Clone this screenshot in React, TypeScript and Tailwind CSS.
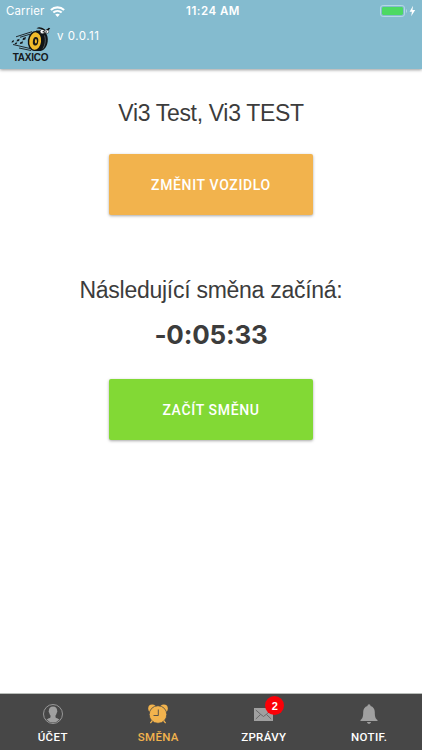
import type { ReactNode } from 'react';

function WifiIcon() {
  return (
    <svg width="15" height="11" viewBox="0 0 15 11" fill="none" stroke="#fff" strokeWidth="2.1">
      <path d="M.9 4C4.6.5 10.400.5 14.100 4" />
      <path d="M3.300 6.600c2.400-2.200 6-2.200 8.400 0" />
      <path d="M7.500 10.900 5.200 8.600c1.300-1.100 3.300-1.100 4.600 0Z" fill="#fff" stroke="none" />
    </svg>
  );
}

function BatteryIcon() {
  return (
    <svg width="36" height="12" viewBox="0 0 36 12" fill="none">
      <rect x=".5" y=".5" width="24" height="11" rx="2.6" stroke="#b5d9e5" />
      <rect x="2" y="2" width="21" height="8" rx="1.4" fill="#4cd964" />
      <path d="M26 4c1.300.5 1.300 3.500 0 4Z" fill="#b5d9e5" />
      <path d="M33 .8 29.600 6.700h2.300L31.200 11.200l4-6.200h-2.700Z" fill="#fff" />
    </svg>
  );
}

function TaxicoLogo() {
  return (
    <svg width="40" height="26" viewBox="0 0 40 26" fill="none">
      {/* speed trail */}
      <path d="M21 5.700 5 10.800M19 8.200 9 11.300M19 22.500 2 18.500M20 24.500 8 22" stroke="#16191c" strokeWidth=".9" />
      <path d="m1 15 2-.9-.4 2-2 .6ZM6 13.700l2.600-1-.5 2.300-2.500.6ZM12 12l3-1-.7 2.500-2.800.7ZM4 17l2.200-.7-.5 1.800-2.200.4ZM9.300 16.200l2.800-.9-.6 2.200-2.700.5Z" fill="#16191c" />
      {/* tyre */}
      <path d="M25 4.500h5c4.400.3 6.800 4.500 6.800 9.300 0 5.700-3 10.500-7.200 11.200h-6Z" fill="#111416" />
      <path d="M33.500 9.500c1.500 4 .8 9.500-1.600 13" stroke="#7d858a" strokeWidth=".6" />
      <ellipse cx="24" cy="15" rx="7.200" ry="10" transform="rotate(7 24 15)" fill="#111416" />
      <ellipse cx="24.200" cy="15" rx="5.900" ry="8.700" transform="rotate(7 24 15)" fill="#f0bb2b" />
      <ellipse cx="24.600" cy="15.200" rx="2.700" ry="4.300" transform="rotate(7 24 15)" fill="#191919" />
      <ellipse cx="24.900" cy="15.300" rx="1" ry="2.200" fill="#f0bb2b" />
      {/* eyes and brows */}
      <ellipse cx="31.500" cy="5.500" rx="2.400" ry="2.200" fill="#fff" stroke="#111" strokeWidth=".5" />
      <ellipse cx="35.800" cy="5.600" rx="1.900" ry="2" fill="#fff" stroke="#111" strokeWidth=".5" />
      <circle cx="32.300" cy="5.800" r=".8" fill="#111" />
      <circle cx="35.300" cy="5.900" r=".7" fill="#111" />
      <path d="M25.500 2.500C27.500.5 30 .7 34 3.500l-.4 1.200C30.500 3 28.500 2.200 25.500 2.500ZM34.800 4.200l3-2.400 1.400.5-1.600 2Z" fill="#111" />
    </svg>
  );
}

function AccountIcon() {
  return (
    <svg width="20" height="20" viewBox="0 0 20 20" fill="none">
      <circle cx="10" cy="10" r="9.500" stroke="#a0a0a0" strokeWidth=".9" />
      <path
        d="M10 2.400c2.800 0 4.200 1.700 4.100 4.200.5.300.2 2-.4 2.300-.2 1.200-.7 1.900-1.200 2.500v1.800c.4 1 2.800 1.200 4 2.400A8.500 8.500 0 0 1 10 18.500a8.500 8.500 0 0 1-6.500-2.900c1.200-1.200 3.600-1.400 4-2.400v-1.800C7 10.800 6.500 10.100 6.300 8.900c-.6-.3-.9-2-.4-2.300C5.800 4.100 7.200 2.400 10 2.400Z"
        fill="#a0a0a0"
      />
    </svg>
  );
}

function AlarmIcon() {
  return (
    <svg width="20" height="20" viewBox="0 0 20 20" fill="none">
      <circle cx="4.200" cy="4.400" r="4" fill="#f2b34d" />
      <circle cx="15.800" cy="4.400" r="4" fill="#f2b34d" />
      <circle cx="10" cy="10.500" r="8.800" fill="#f2b34d" stroke="#474747" strokeWidth=".8" />
      <path d="m4.300 16.700-1.900 2.500M15.700 16.700l1.900 2.500" stroke="#f2b34d" strokeWidth="1.200" />
      <path d="M10.300 5.500v6H5.500" stroke="#474747" strokeWidth=".9" />
    </svg>
  );
}

function MailIcon() {
  return (
    <svg width="19" height="13" viewBox="0 0 19 13" fill="none">
      <path d="M0 0h19v13H0Z" fill="#a0a0a0" />
      <path d="m1.800 2 4.700 4.200L9.500 8.500l3-2.300L17.200 2M1.800 11l4.700-4.500M17.200 11l-4.700-4.500" stroke="#5c5c5c" strokeWidth=".8" />
    </svg>
  );
}

function BellIcon() {
  return (
    <svg width="18" height="20" viewBox="0 0 18 20" fill="#a0a0a0">
      <path d="M9 .3c1 0 1.500.7 1.500 1.700 2.800.7 4.300 3 4.300 6 0 5 .7 6.500 2.700 8v1H.5v-1c2-1.500 2.700-3 2.700-8 0-3 1.500-5.300 4.300-6C7.500 1 8 .3 9 .3ZM7 17.900h4c-.2 1.100-.9 1.800-2 1.800s-1.800-.7-2-1.800Z" />
    </svg>
  );
}

interface TabProps {
  label: string;
  icon: ReactNode;
  active?: boolean;
  badge?: number;
}

function Tab({ label, icon, active, badge }: TabProps) {
  return (
    <button className={`flex flex-1 flex-col items-center pt-[9px] ${active ? 'text-[#f2b34d]' : 'text-white'}`}>
      <span className="relative flex h-[22px] items-center justify-center">
        {icon}
        {badge && (
          <span className="absolute -top-[7px] left-[11px] flex size-[19px] items-center justify-center rounded-full bg-[#fb0007] pt-[1px] font-['Liberation_Sans',sans-serif] text-[11px] font-bold text-white">
            {badge}
          </span>
        )}
      </span>
      <span className="mt-[5px] text-[11.5px] leading-[15px] font-medium tracking-[0.35px]">{label}</span>
    </button>
  );
}

export default function App() {
  return (
    <div className="flex h-[750px] w-[422px] flex-col overflow-hidden bg-white font-[Roboto,sans-serif] text-[#3c3c3c]">
      <header className="h-[69px] shrink-0 bg-[#84bbcf] text-white shadow-[0_1px_3px_rgba(0,0,0,0.4)]">
        <div className="grid h-[22px] grid-cols-3 items-center px-[6px] font-[Inter,sans-serif] text-[11.5px] leading-[22px]">
          <div className="flex items-center gap-[6px]">
            <span className="tracking-[0.1px]">Carrier</span>
            <WifiIcon />
          </div>
          <span className="pl-[4px] text-center font-semibold tracking-[0.5px]">11:24 AM</span>
          <div className="flex justify-end">
            <BatteryIcon />
          </div>
        </div>
        <div className="flex pl-[10px]">
          <div className="flex w-[41px] flex-col items-center pt-[4px]">
            <TaxicoLogo />
            <span className="font-['Liberation_Sans',sans-serif] text-[10px] leading-[11px] font-bold tracking-[-0.25px] text-[#16191c]">
              TAXICO
            </span>
          </div>
          <span className="pt-[7px] pl-[6px] font-[Inter,sans-serif] text-[11.5px] leading-[14px] tracking-[0.5px]">v 0.0.11</span>
        </div>
      </header>

      <main className="flex flex-1 flex-col items-center">
        <h1 className="mt-[30px] font-['Liberation_Sans',sans-serif] text-[23px] leading-[28px] tracking-[-0.33px]">
          Vi3 Test, Vi3 TEST
        </h1>
        <button className="mt-[27px] h-[61px] w-[204px] rounded-[2px] bg-[#f2b34d] pt-[2px] text-[14px] font-medium tracking-[0.65px] text-white shadow-[0_1px_3px_rgba(0,0,0,0.35)]">
          ZMĚNIT VOZIDLO
        </button>
        <h2 className="mt-[61px] font-['Liberation_Sans',sans-serif] text-[23px] leading-[28px] tracking-[-0.27px]">
          Následující směna začíná:
        </h2>
        <p className="mt-[14px] font-[Inter,sans-serif] text-[26px] leading-[34px] font-bold tracking-[-0.2px]">-0:05:33</p>
        <button className="mt-[27px] h-[61px] w-[204px] rounded-[2px] bg-[#82d935] pt-[2px] text-[14px] font-medium tracking-[0.65px] text-white shadow-[0_1px_3px_rgba(0,0,0,0.35)]">
          ZAČÍT SMĚNU
        </button>
      </main>

      <nav className="flex h-[57px] shrink-0 items-start border-t border-[#b9bdb9] bg-[#474747]">
        <Tab label="ÚČET" icon={<AccountIcon />} />
        <Tab label="SMĚNA" icon={<AlarmIcon />} active />
        <Tab label="ZPRÁVY" icon={<MailIcon />} badge={2} />
        <Tab label="NOTIF." icon={<BellIcon />} />
      </nav>
    </div>
  );
}
